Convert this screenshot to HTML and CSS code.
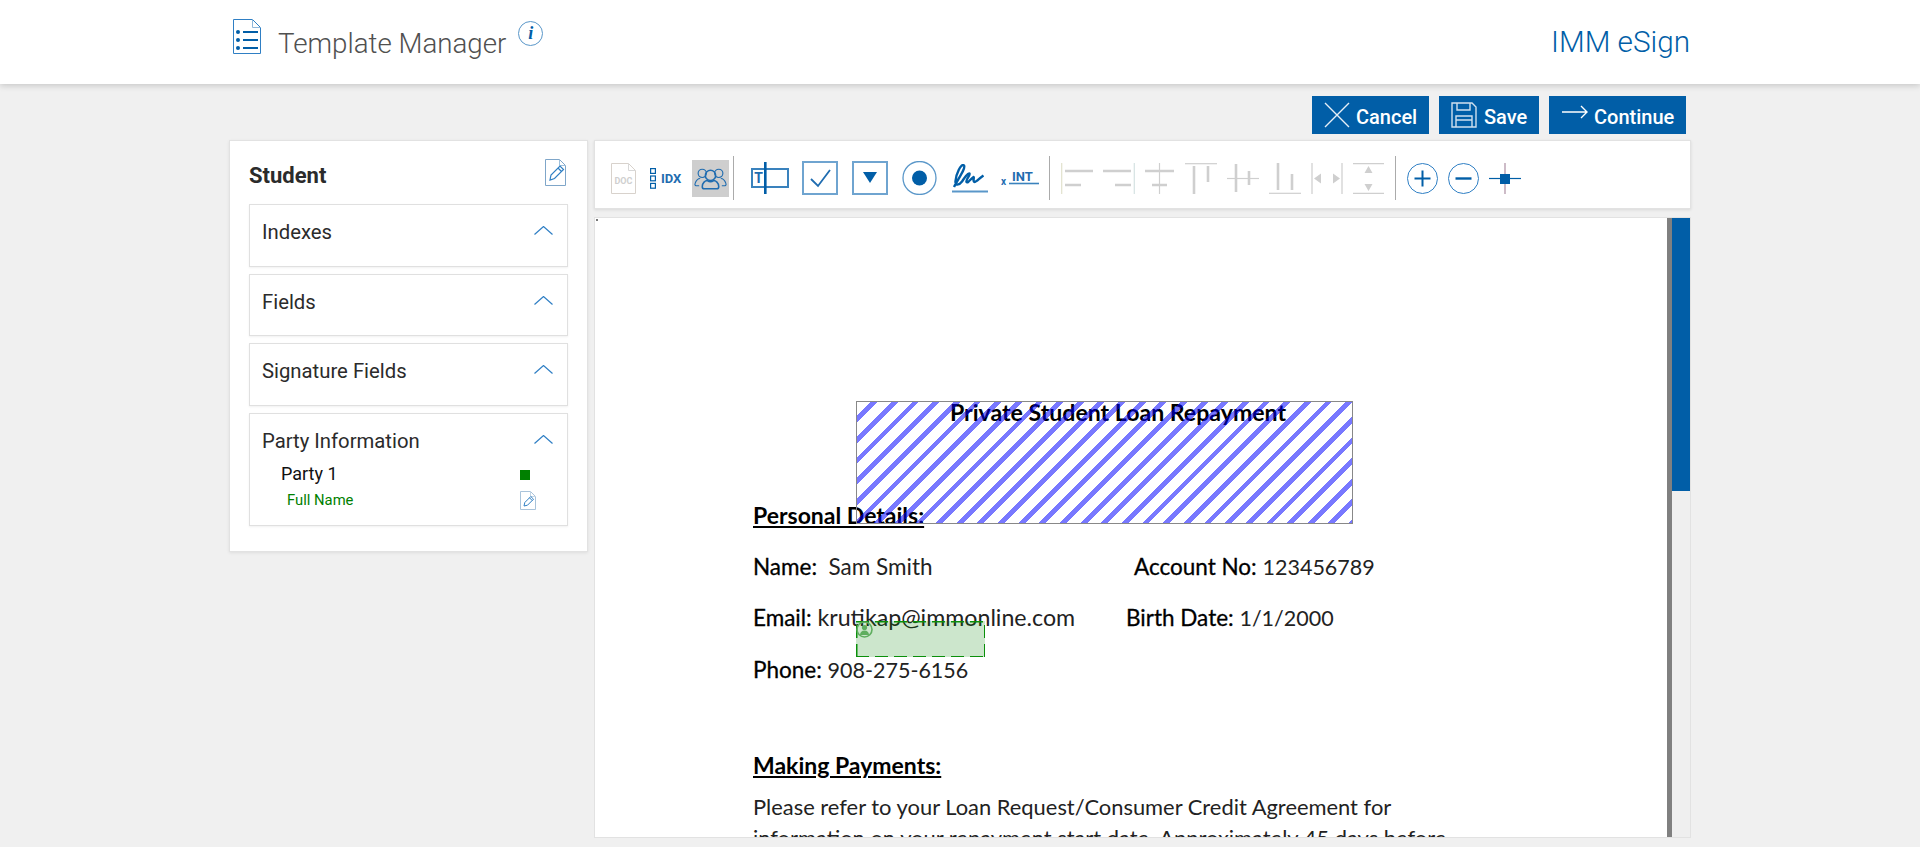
FILE: index.html
```html
<!DOCTYPE html>
<html lang="en">
<head>
<meta charset="utf-8">
<title>Template Manager</title>
<link rel="stylesheet" href="styles.css">
</head>
<body>
<header class="topbar">
  <div class="brand">
    <svg class="brand-icon" viewBox="0 0 28 35" fill="none"><path d="M.5.5h19l8 8v26H.5z" stroke="#2f7fc4"/><path d="M19.500.5v8h8" stroke="#8fb8dc"/><g fill="#015ea7"><circle cx="5" cy="13" r="2"/><circle cx="5" cy="21" r="2"/><circle cx="5" cy="29" r="2"/><rect x="10" y="12" width="15" height="2"/><rect x="10" y="20" width="15" height="2"/><rect x="10" y="28" width="15" height="2"/></g></svg>
    <h1 class="brand-title">Template Manager</h1>
    <span class="info">i</span>
  </div>
  <div class="product">IMM eSign</div>
</header>

<nav class="actions">
  <button class="btn btn-cancel"><svg class="btn-x" viewBox="0 0 26 26" fill="none" stroke="#e6eff7" stroke-width="1.400"><path d="M1 1l24 24M25 1L1 25"/></svg><span class="btn-label">Cancel</span></button>
  <button class="btn btn-save"><svg class="btn-disk" viewBox="0 0 26 26" fill="none" stroke="#cfe0ef" stroke-width="1.400"><path d="M1 1h20l4 4v20H1z"/><path d="M6 1v7h13V1M5 25V14h16v11M5 18h16"/></svg><span class="btn-label">Save</span></button>
  <button class="btn btn-continue"><svg class="btn-arrow" viewBox="0 0 26 14" fill="none" stroke="#fff" stroke-width="1.400"><path d="M0 7h25M19 1l6 6-6 6"/></svg><span class="btn-label">Continue</span></button>
</nav>

<main class="workspace">
  <aside class="panel">
    <div class="panel-head">
      <h2 class="panel-title">Student</h2>
      <svg class="edit-icon" viewBox="0 0 21 27" fill="none"><path d="M.5.5h14l6 6v20H.5z" stroke="#7fa6c9"/><path d="M14.500.5v6h6" stroke="#9fc0dc"/><path d="M5 21l1-5 9-9 3.500 3.500-9 9zM13 9l3.500 3.500" stroke="#2f7fc4" stroke-width="1.200"/></svg>
    </div>
    <section class="acc"><div class="acc-head"><span>Indexes</span><svg class="chev" viewBox="0 0 19 9" fill="none" stroke="#2f7fc4" stroke-width="1.200"><path d="M.5 8.500l9-8 9 8"/></svg></div></section>
    <section class="acc acc-short"><div class="acc-head"><span>Fields</span><svg class="chev" viewBox="0 0 19 9" fill="none" stroke="#2f7fc4" stroke-width="1.200"><path d="M.5 8.500l9-8 9 8"/></svg></div></section>
    <section class="acc"><div class="acc-head"><span>Signature Fields</span><svg class="chev" viewBox="0 0 19 9" fill="none" stroke="#2f7fc4" stroke-width="1.200"><path d="M.5 8.500l9-8 9 8"/></svg></div></section>
    <section class="acc acc-open">
      <div class="acc-head"><span>Party Information</span><svg class="chev" viewBox="0 0 19 9" fill="none" stroke="#2f7fc4" stroke-width="1.200"><path d="M.5 8.500l9-8 9 8"/></svg></div>
      <div class="party-row"><span class="party-name">Party 1</span><span class="party-swatch"></span></div>
      <div class="field-row"><span class="field-name">Full Name</span>
        <svg class="edit-small" viewBox="0 0 16 19" fill="none"><path d="M.5.5h10l5 5v13H.5z" stroke="#a9c3da"/><path d="M10.500.5v5h5" stroke="#c5d6e5"/><path d="M4 15l.8-3.500 6-6 2.700 2.700-6 6zM9.500 6.800l2.700 2.700" stroke="#2f7fc4"/></svg>
      </div>
    </section>
  </aside>

  <div class="editor">
    <div class="toolbar">
      <svg class="tool t-doc" viewBox="0 0 25 31" fill="none"><path d="M.5.5h17l7 7v23H.5z" stroke="#d8d2cc"/><path d="M17.500.5v7h7" stroke="#d8d8d8"/><text x="12.500" y="21" class="doc-label">DOC</text></svg>
      <svg class="tool t-idx" viewBox="0 0 32 21" fill="none"><g stroke="#015ea7" stroke-width="1.200"><rect x=".6" y=".6" width="4.800" height="4.800"/><rect x=".6" y="8" width="4.800" height="4.800"/><rect x=".6" y="15.400" width="4.800" height="4.800"/></g><text x="11" y="15" class="idx-label">IDX</text></svg>
      <div class="t-party"><svg class="party-icon" viewBox="0 0 32 22" fill="none" stroke="#1f6cb0" stroke-width="1.100"><circle cx="8" cy="6" r="4"/><circle cx="24" cy="6" r="4"/><path d="M5 18H2a1.500 1.500 0 0 1-1-2c1-3 3-5 5-5M27 18h3a1.500 1.500 0 0 0 1-2c-1-3-3-5-5-5"/><circle cx="16" cy="8" r="5" stroke-width="1.500"/><path d="M8 19c0-4 3-6 5-6 2 1.500 4 1.500 6 0 2 0 5 2 5 6 0 1.500-1 2-2 2H10c-1 0-2-.5-2-2z" stroke-width="1.500"/></svg></div>
      <span class="sep sep-a"></span>
      <svg class="tool t-text" viewBox="0 0 38 32" fill="none"><rect x="1" y="7" width="36" height="18" stroke="#3a82bd" stroke-width="2"/><rect x="13" y="0" width="2.600" height="32" fill="#015ea7"/><text x="7.500" y="21" class="t-label">T</text></svg>
      <svg class="tool t-check" viewBox="0 0 36 34" fill="none"><rect x="1" y="1" width="34" height="32" stroke="#6fa4d0" stroke-width="2"/><path d="M9 18l7 7L28 9" stroke="#1f6cb0" stroke-width="1.800"/></svg>
      <svg class="tool t-drop" viewBox="0 0 36 34" fill="none"><rect x="1" y="1" width="34" height="32" stroke="#6fa4d0" stroke-width="2"/><path d="M11 11h14l-7 11z" fill="#015ea7"/></svg>
      <svg class="tool t-radio" viewBox="0 0 35 34" fill="none"><circle cx="17.500" cy="17" r="16.500" stroke="#5a97c9" stroke-width="1.300"/><circle cx="17.500" cy="17" r="7.500" fill="#015ea7"/></svg>
      <svg class="tool t-sign" viewBox="0 0 36 29" fill="none"><path d="M2 23C6 15 14 4 12 1.500 9-1 4 10 3.500 17c-.5 5 3.500 4.500 6.500.5 2-3 6-9 7.500-8 1 2-4 6-3 8.500 1 2 5-4 7-5 1 0-1 5 1 5s5-4 9-6.500" stroke="#015ea7" stroke-width="2.400"/><path d="M0 27.500h36" stroke="#5a97c9" stroke-width="1.800"/></svg>
      <svg class="tool t-int" viewBox="0 0 38 15" fill="none"><text x="0" y="14" class="x-label">x</text><text x="11" y="10" class="int-label">INT</text><path d="M8 12.500h30" stroke="#3a82bd" stroke-width="1.600"/></svg>
      <span class="sep sep-b"></span>
      <svg class="tool t-align" viewBox="0 0 32 31" stroke="#cfcfcf" stroke-width="2.600" fill="none"><path d="M.7 0v31" stroke="#e2e2cc" stroke-width="1.200"/><path d="M4 8h28M4 22h16"/></svg>
      <svg class="tool t-align" viewBox="0 0 32 31" stroke="#cfcfcf" stroke-width="2.600" fill="none"><path d="M31.300 0v31" stroke="#d5e2e2" stroke-width="1.200"/><path d="M0 8h28M12 22h16"/></svg>
      <svg class="tool t-align t-narrow" viewBox="0 0 29 31" stroke="#cfcfcf" stroke-width="2.600" fill="none"><path d="M14.500 0v31" stroke-width="1.200"/><path d="M0 8h29M7 22h15"/></svg>
      <svg class="tool t-align" viewBox="0 0 32 31" stroke="#cfcfcf" stroke-width="2.600" fill="none"><path d="M0 .7h32" stroke-width="1.200"/><path d="M9 3v28M23 3v16"/></svg>
      <svg class="tool t-align" viewBox="0 0 32 31" stroke="#cfcfcf" stroke-width="2.600" fill="none"><path d="M0 15.500h32" stroke-width="1.200"/><path d="M9 1v28M22 8v14"/></svg>
      <svg class="tool t-align" viewBox="0 0 32 31" stroke="#cfcfcf" stroke-width="2.600" fill="none"><path d="M0 30.300h32" stroke-width="1.200"/><path d="M9 0v27M23 11v16"/></svg>
      <svg class="tool t-align" viewBox="0 0 32 31" stroke="#d5d5d5" stroke-width="1.400" fill="none"><path d="M1 0v31M31 0v31"/><path d="M3 15.500l7-5v10zM29 15.500l-7-5v10z" fill="#cfcfcf" stroke="none"/></svg>
      <svg class="tool t-align t-end" viewBox="0 0 31 31" stroke="#cfcfcf" stroke-width="1.200" fill="none"><path d="M0 .7h31M0 30.300h31"/><path d="M15.500 3l4 7h-8zM15.500 28l4-7h-8z" fill="#cfcfcf" stroke="none"/></svg>
      <span class="sep sep-c"></span>
      <svg class="tool t-zoom" viewBox="0 0 31 31" fill="none"><circle cx="15.500" cy="15.500" r="15" stroke="#2f7fc4"/><path d="M7.500 15.500h16M15.500 7.500v16" stroke="#015ea7" stroke-width="2"/></svg>
      <svg class="tool t-zoom" viewBox="0 0 31 31" fill="none"><circle cx="15.500" cy="15.500" r="15" stroke="#2f7fc4"/><path d="M7.500 15.500h16" stroke="#015ea7" stroke-width="2.400"/></svg>
      <svg class="tool t-cross" viewBox="0 0 32 31" fill="none"><path d="M0 15.500h32" stroke="#015ea7" stroke-width="1.200"/><path d="M16 0v31" stroke="#b89fb0" stroke-width="1.400"/><rect x="11" y="11" width="10" height="10" fill="#015ea7"/></svg>
    </div>

    <div class="viewer">
      <article class="page">
        <span class="origin-dot"></span>
        <p class="doc-title">Private Student Loan Repayment</p>
        <h3 class="doc-heading">Personal Details:</h3>
        <div class="doc-row"><span class="doc-col col-name"><b>Name:</b>&nbsp; Sam Smith</span><span><b>Account No:</b> <span class="digits">123456789</span></span></div>
        <div class="doc-row"><span class="doc-col col-email"><b>Email:</b> <span class="mail">krutikap@immonline.com</span></span><span><b>Birth Date:</b> <span class="digits">1/1/2000</span></span></div>
        <div class="doc-row"><span><b>Phone:</b> <span class="digits">908-275-6156</span></span></div>
        <h3 class="doc-heading heading-pay">Making Payments:</h3>
        <p class="doc-para">Please refer to your Loan Request/Consumer Credit Agreement for<br>information on your repayment start date. Approximately 45 days before</p>
        <div class="hatch"></div>
        <div class="sign-field"><svg class="sign-badge" viewBox="0 0 17 17" fill="none"><circle cx="8.500" cy="8.500" r="7.500" stroke="#5fae5f" stroke-width="1.600"/><circle cx="8.500" cy="6.500" r="2.600" fill="#5fae5f"/><path d="M4 14c0-3 2-4.500 4.500-4.500S13 11 13 14z" fill="#5fae5f"/></svg></div>
      </article>
      <div class="page-edge"></div>
      <div class="scroll-track"><div class="scroll-thumb"></div></div>
    </div>
  </div>
</main>
</body>
</html>
```

FILE: styles.css
```css
* { box-sizing: border-box; }
html, body { margin: 0; height: 847px; overflow: hidden; }
body { background: #f0f0f0; font-family: Roboto, "Liberation Sans", sans-serif; color: #2b2b2b; }

.topbar {
  height: 84px; background: #fff; box-shadow: 0 2px 6px rgba(0,0,0,.16);
  display: flex; justify-content: space-between; padding: 0 230px 0 233px; position: relative;
}
.brand { display: flex; align-items: flex-start; }
.brand-icon { width: 28px; height: 35px; margin-top: 19px; }
.brand-title { margin: 26px 0 0 17px; font-size: 27.700px; line-height: 36px; font-weight: 300; color: #505050; }
.info {
  width: 25px; height: 25px; margin: 21px 0 0 12px; border: 1px solid #5a97c9; border-radius: 50%;
  font: italic bold 18px/23px "Liberation Serif", serif; color: #015ea7; text-align: center;
}
.product { margin-top: 22px; font-size: 29.700px; line-height: 40px; font-weight: 300; color: #015ea7; }

.actions { display: flex; justify-content: flex-end; gap: 10px; padding-right: 234px; margin-top: 12px; }
.btn {
  height: 38px; border: 0; background: #015ea7; color: #fff; padding: 0;
  display: flex; align-items: center; font: 500 20px Roboto, sans-serif;
}
.btn-label { padding-top: 3px; }
.btn-cancel { width: 117px; padding-left: 12px; }
.btn-save { width: 100px; padding-left: 12px; }
.btn-continue { width: 137px; padding-left: 13px; }
.btn-x { width: 26px; height: 26px; margin-right: 6px; }
.btn-disk { width: 26px; height: 26px; margin-right: 7px; }
.btn-arrow { width: 26px; height: 14px; margin: 0 6px 6px 0; }

.workspace { display: flex; align-items: flex-start; gap: 6px; padding-left: 229px; margin-top: 6px; }
.panel {
  width: 359px; height: 412px; background: #fff; border: 1px solid #e2e2e2; box-shadow: 0 1px 3px rgba(0,0,0,.08);
  padding: 0 19px;
}
.panel-head { height: 63px; display: flex; justify-content: space-between; align-items: flex-start; }
.panel-title { margin: 21px 0 0; font-size: 22px; line-height: 28px; font-weight: 700; color: #2b2b2b; }
.edit-icon { width: 21px; height: 27px; margin: 18px 2px 0 0; }
.acc {
  height: 63px; border: 1px solid #e0e0e0; margin-bottom: 7px; box-shadow: 0 1px 2px rgba(0,0,0,.06);
  padding: 0 13px 0 12px;
}
.acc-short { height: 62px; }
.acc-open { height: 113px; margin-bottom: 0; }
.acc-head { height: 42px; display: flex; justify-content: space-between; padding-top: 15px; font-size: 20.300px; line-height: 24px; }
.chev { width: 19px; height: 9px; margin: 6px 1px 0 0; }
.party-row, .field-row { display: flex; justify-content: space-between; }
.party-row { padding: 6px 24px 0 19px; font-size: 18px; line-height: 23px; color: #111; align-items: center; }
.party-swatch { width: 10px; height: 10px; background: #008000; margin-top: 2px; }
.field-row { padding: 3px 18px 0 25px; height: 27px; align-items: center; }
.field-name { font-size: 14.800px; color: #008000; }
.edit-small { width: 16px; height: 19px; }

.editor { width: 1097px; }
.toolbar {
  height: 69px; background: #fff; border: 1px solid #e2e2e2; box-shadow: 0 1px 3px rgba(0,0,0,.1);
  display: flex; align-items: center; padding: 7px 0 0 16px;
}
.tool { display: block; flex: none; }
.t-doc { width: 25px; height: 31px; margin-right: 14px; }
.doc-label { font: 700 9px Roboto, sans-serif; fill: #cfcfcf; text-anchor: middle; }
.t-idx { width: 32px; height: 21px; margin-right: 10px; }
.idx-label { font: 700 13px Roboto, sans-serif; fill: #1f6cb0; }
.t-party { width: 37px; height: 37px; background: #cecece; display: flex; align-items: center; justify-content: center; }
.party-icon { width: 33px; height: 23px; }
.sep { width: 1px; height: 44px; background: #ababab; flex: none; }
.sep-a { margin: 0 17px 0 4px; }
.sep-b { margin: 0 11px 0 10px; }
.sep-c { margin: 0 11px 0 11px; }
.t-text { width: 38px; height: 32px; margin-right: 13px; }
.t-label { font: 700 14px Roboto, sans-serif; fill: #1f6cb0; text-anchor: middle; }
.t-check, .t-drop { width: 36px; height: 34px; margin-right: 14px; }
.t-radio { width: 35px; height: 34px; margin-right: 15px; }
.t-sign { width: 36px; height: 29px; margin-right: 13px; }
.t-int { width: 38px; height: 15px; }
.x-label { font: 700 10px Roboto, sans-serif; fill: #1f6cb0; }
.int-label { font: 700 13px Roboto, sans-serif; fill: #1f6cb0; }
.t-align { width: 32px; height: 31px; margin-right: 10px; }
.t-narrow { width: 29px; margin-right: 11px; }
.t-end { width: 31px; margin-right: 0; }
.t-zoom { width: 31px; height: 31px; margin-right: 10px; }
.t-cross { width: 32px; height: 31px; }

.viewer {
  height: 621px; margin-top: 8px; display: flex; border: 1px solid #e2e2e2; background: #fff; overflow: hidden;
}
.page {
  width: 1072px; height: 100%; position: relative; background: #fff; padding: 182px 0 0 158px;
  font-family: Lato, "Open Sans", sans-serif; font-size: 22.500px; line-height: 24px; color: #222;
}
.page b { color: #000; font-weight: 400; -webkit-text-stroke: .3px #000; }
.digits { font-size: 21.500px; }
.mail { font-size: 23.200px; }
.origin-dot { position: absolute; left: 1px; top: 1px; width: 2px; height: 2px; background: #777; }
.doc-title { margin: 0 0 0 197px; font-size: 23.100px; font-weight: 700; color: #000; }
.doc-heading { margin: 79px 0 0; font-size: 23px; font-weight: 700; color: #000; text-decoration: underline; }
.doc-row { display: flex; height: 25px; margin-top: 26.500px; line-height: 25px; }
.col-name { width: 381px; }
.col-email { width: 373px; }
.heading-pay { margin-top: 71.500px; }
.doc-para { margin: 14px 0 0; font-size: 21.900px; line-height: 31px; }
.hatch {
  position: absolute; left: 261px; top: 183px; width: 497px; height: 123px; border: 1px solid #888;
  background: repeating-linear-gradient(135deg, transparent 0 9.800px, rgba(0,0,255,.53) 9.800px 14.600px);
}
.sign-field {
  position: absolute; left: 261px; top: 403px; width: 129px; height: 36px; background-color: rgba(0,128,0,.2);
  background-image:
    repeating-linear-gradient(90deg, #0a8f0a 0 13px, transparent 13px 19px),
    repeating-linear-gradient(90deg, #0a8f0a 0 13px, transparent 13px 19px),
    repeating-linear-gradient(0deg, #0a8f0a 0 13px, transparent 13px 19px),
    repeating-linear-gradient(0deg, #0a8f0a 0 13px, transparent 13px 19px);
  background-size: 100% 1.500px, 100% 1.500px, 1.500px 100%, 1.500px 100%;
  background-position: 0 0, 0 100%, 0 0, 100% 0;
  background-repeat: no-repeat;
}
.sign-badge { position: absolute; left: 0; top: 0; width: 17px; height: 17px; }
.page-edge { width: 5px; background: #808080; flex: none; }
.scroll-track { flex: 1; background: #efefef; }
.scroll-thumb { height: 273px; background: #015ea7; }
```
